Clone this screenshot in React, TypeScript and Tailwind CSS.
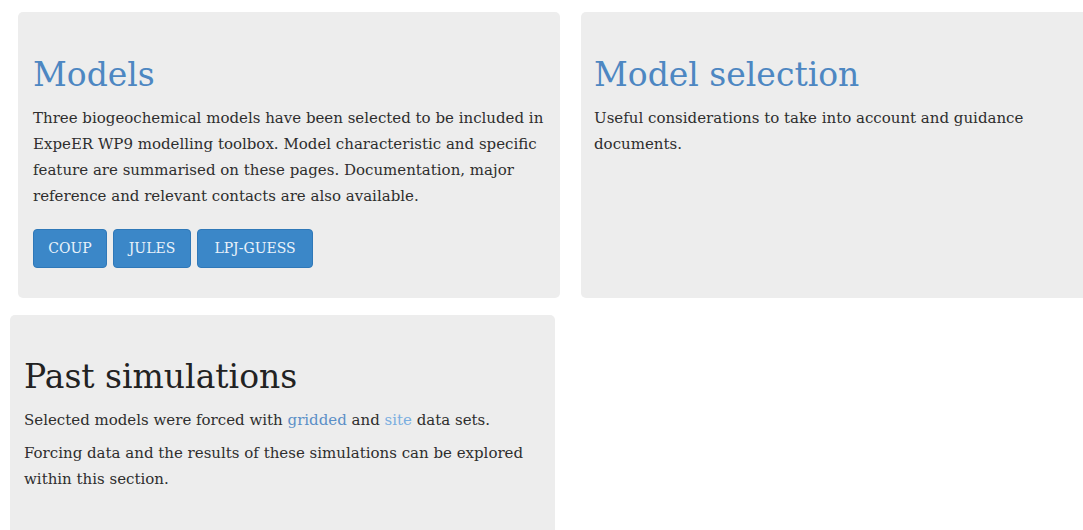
import type { ReactNode } from 'react';

const serif = { fontFamily: '"DejaVu Serif", "Liberation Serif", serif' };

const Panel = ({ className, children }: { className: string; children: ReactNode }) => (
  <section className={`bg-[#ededed] rounded-[5px] ${className}`}>{children}</section>
);

const ModelButton = ({ label, width }: { label: string; width: string }) => (
  <button
    className={`${width} h-[39px] rounded-[4px] bg-[#3b87c8] border border-[#2f78b8] text-[#eaf2fa] text-[14px] uppercase flex items-center justify-center`}
  >
    {label}
  </button>
);

const App = () => {
  return (
    <div className="w-full h-[530px] bg-white overflow-hidden text-[#2e2e2e]" style={serif}>
      <div className="flex pt-[12px] pl-[18px] gap-[21px]">
        <Panel className="w-[542px] h-[286px] shrink-0 pl-[15px] pr-[8px] pt-[43px]">
          <h2 className="text-[33px] leading-[40px] text-[#4d87c2]">Models</h2>
          <p className="mt-[10px] text-[15px] leading-[26px]">
            Three biogeochemical models have been selected to be included in ExpeER WP9 modelling
            toolbox. Model characteristic and specific feature are summarised on these pages.
            Documentation, major reference and relevant contacts are also available.
          </p>
          <div className="flex gap-[6px] mt-[20px]">
            <ModelButton label="COUP" width="w-[74px]" />
            <ModelButton label="JULES" width="w-[78px]" />
            <ModelButton label="LPJ-GUESS" width="w-[116px]" />
          </div>
        </Panel>

        <Panel className="flex-1 h-[286px] rounded-r-none px-[13px] pt-[43px]">
          <h2 className="text-[33px] leading-[40px] text-[#4d87c2]">Model selection</h2>
          <p className="mt-[10px] text-[15px] leading-[26px] w-[450px]">
            Useful considerations to take into account and guidance documents.
          </p>
        </Panel>
      </div>

      <div className="pl-[10px] mt-[17px]">
        <Panel className="w-[545px] h-[240px] px-[14px] pt-[42px]">
          <h2 className="text-[33px] leading-[40px] text-[#222]">Past simulations</h2>
          <p className="mt-[10px] text-[15px] leading-[26px]">
            Selected models were forced with <a className="text-[#5b8fc7]">gridded</a> and{' '}
            <a className="text-[#7aaee0]">site</a> data sets.
          </p>
          <p className="mt-[7px] text-[15px] leading-[26px]">
            Forcing data and the results of these simulations can be explored within this section.
          </p>
        </Panel>
      </div>
    </div>
  );
};

export default App;
